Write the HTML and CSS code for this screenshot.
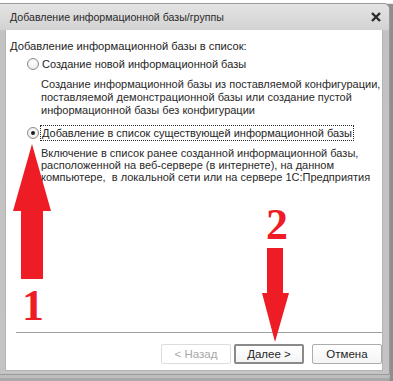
FILE: index.html
```html
<!DOCTYPE html>
<html lang="ru">
  <head>
    <meta charset="UTF-8" />
    <title>Добавление информационной базы/группы</title>
    <link rel="stylesheet" href="styles.css">
  </head>
  <body>
    <div class="backdrop"></div>
    <div class="window">
      <div class="titlebar">
        <span class="title">Добавление информационной базы/группы</span>
        <span class="close">
          <svg width="12" height="12" viewBox="0 0 12 12">
            <path d="M2 2 L10 10 M10 2 L2 10" stroke="#2b2b2b" stroke-width="2.4" />
          </svg>
        </span>
      </div>
      <div class="content">
        <p class="heading">Добавление информационной базы в список:</p>

        <label class="option">
          <span class="radio"></span>
          <span class="option-label">Создание новой информационной базы</span>
        </label>
        <p class="desc">
          Создание информационной базы из поставляемой конфигурации,<br>
          поставляемой демонстрационной базы или создание пустой<br>
          информационной базы без конфигурации
        </p>

        <label class="option checked">
          <span class="radio"></span>
          <span class="option-label focused">Добавление в список существующей информационной базы</span>
        </label>
        <p class="desc desc-tight">
          Включение в список ранее созданной информационной базы,<br>
          расположенной на веб-сервере (в интернете), на данном<br>
          компьютере,&nbsp; в локальной сети или на сервере 1С:Предприятия
        </p>

        <div class="spacer"></div>
        <div class="separator"></div>
        <div class="buttons">
          <button class="btn" disabled>&lt; Назад</button>
          <button class="btn default">Далее &gt;</button>
          <button class="btn cancel">Отмена</button>
        </div>
      </div>

      <!-- annotation arrows -->
      <svg class="arrow arrow-up" width="40" height="140" viewBox="0 0 40 140">
        <polygon points="19,0 38,67 30,67 30,135 8,135 8,67 0,67" fill="#ee1c25" />
      </svg>
      <span class="mark mark-1">1</span>
      <span class="mark mark-2">2</span>
      <svg class="arrow arrow-down" width="30" height="96" viewBox="0 0 30 96">
        <polygon points="6,0 22,0 22,45 28,45 14,94 1,45 6,45" fill="#ee1c25" />
      </svg>
    </div>
  </body>
</html>
```

FILE: styles.css
```css
* {
  margin: 0;
  padding: 0;
  box-sizing: border-box;
}
body {
  width: 393px;
  height: 381px;
  overflow: hidden;
  background-color: #8f8f8f;
  font-family: "Liberation Sans", Arial, sans-serif;
  font-size: 11px;
  color: #1e1e1e;
  position: relative;
}
.backdrop {
  height: 4px;
  background-color: #ffffff;
  border-bottom: 1px solid #e6e6e6;
}
.window {
  position: absolute;
  top: 3px;
  left: 0;
  width: 390px;
  height: 372px;
  background: linear-gradient(#d6d6d6, #c2c2c2 30px, #c4c4c4);
  border: 1px solid #9a9a9a;
  border-left: none;
  border-radius: 0 6px 2px 0;
  padding: 0 6px 3px 5px;
  display: flex;
  flex-direction: column;
  box-shadow: 0 3px 0 #bdbdbd, 0 6px 0 #a9a9a9;
}
.titlebar {
  height: 26px;
  display: flex;
  align-items: center;
  justify-content: space-between;
  background: linear-gradient(#e4e4e4, #d2d2d2);
  margin: 0 -6px 0 -5px;
  padding: 0 7px 0 10px;
  border-radius: 0 6px 0 0;
}
.title {
  color: #2a2a2a;
  font-size: 10.6px;
}
.close {
  display: flex;
}
.content {
  flex: 1;
  background-color: #ffffff;
  border: 1px solid #b4b4b4;
  border-top: none;
  padding: 9px 0 6px 4px;
  display: flex;
  flex-direction: column;
  white-space: nowrap;
}
.heading {
  font-size: 11.2px;
  line-height: 14px;
  margin-bottom: 2px;
}
.option {
  display: flex;
  align-items: center;
  padding-left: 17px;
  height: 18px;
}
.radio {
  width: 12px;
  height: 12px;
  border-radius: 50%;
  border: 1px solid #8c8c8c;
  background: radial-gradient(circle at 50% 40%, #ffffff, #e4e4e4);
  margin-right: 1px;
  display: flex;
  align-items: center;
  justify-content: center;
}
.checked .radio::after {
  content: "";
  width: 4px;
  height: 4px;
  border-radius: 50%;
  background-color: #1e1e1e;
}
.option-label {
  padding: 1px 1px;
  border: 1px dotted transparent;
}
.option-label.focused {
  border-color: #2a2a2a;
}
.desc {
  padding-left: 31px;
  line-height: 13px;
  margin: 5px 0 7px;
  color: #2a2a2a;
}
.desc-tight {
  line-height: 12px;
  margin-top: 5px;
}
.spacer {
  flex: 1;
}
.separator {
  height: 1px;
  background-color: #a0a0a0;
  margin: 0 0 11px 6px;
}
.buttons {
  display: flex;
  justify-content: flex-end;
  gap: 3px;
}
.btn {
  width: 70px;
  height: 20px;
  font-family: "Liberation Sans", Arial, sans-serif;
  font-size: 11.5px;
  color: #1e1e1e;
  background: linear-gradient(#ffffff, #f4f4f4);
  border: 1px solid #acacac;
  border-radius: 2px;
}
.btn.cancel {
  margin-left: 5px;
}
.btn:disabled {
  color: #a8a8a8;
  border-color: #dcdcdc;
  background: #ffffff;
}
.btn.default {
  border: 2px solid #8a8a8a;
}
.arrow {
  position: absolute;
}
.arrow-up {
  left: 13px;
  top: 140px;
}
.arrow-down {
  left: 261px;
  top: 244px;
}
.mark {
  position: absolute;
  font-family: "Liberation Serif", "Times New Roman", serif;
  font-weight: bold;
  font-size: 44px;
  line-height: 1;
  color: #ee1c25;
}
.mark-1 {
  left: 22px;
  top: 280px;
}
.mark-2 {
  left: 266px;
  top: 199px;
}
```
